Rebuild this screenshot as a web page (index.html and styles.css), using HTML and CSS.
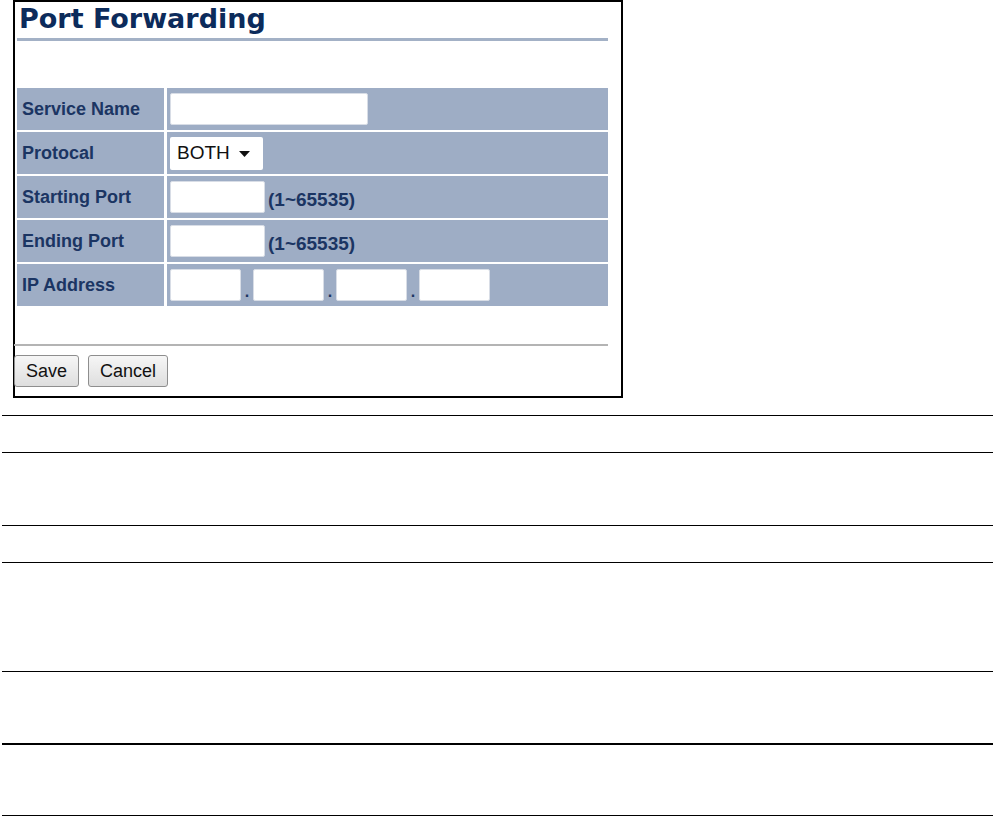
FILE: index.html
```html
<!DOCTYPE html>
<html lang="en">
<head>
  <meta charset="UTF-8" />
  <title>Port Forwarding</title>
  <link rel="stylesheet" href="styles.css">
</head>
<body>
  <div class="shot">
    <h1 class="page-title">Port Forwarding</h1>

    <div class="form-grid">
      <div class="label">Service Name</div>
      <div class="value"><input type="text" class="wide"></div>

      <div class="label">Protocal</div>
      <div class="value">
        <div class="select">
          <span>BOTH</span>
          <svg width="11" height="6" viewBox="0 0 11 6"><path d="M0 0 H11 L5.5 6 Z" fill="#111"/></svg>
        </div>
      </div>

      <div class="label">Starting Port</div>
      <div class="value"><input type="text" class="port"><span class="hint">(1~65535)</span></div>

      <div class="label">Ending Port</div>
      <div class="value"><input type="text" class="port"><span class="hint">(1~65535)</span></div>

      <div class="label">IP Address</div>
      <div class="value ip">
        <input type="text" class="octet"><span class="dot">.</span>
        <input type="text" class="octet"><span class="dot">.</span>
        <input type="text" class="octet"><span class="dot">.</span>
        <input type="text" class="octet">
      </div>
    </div>

    <div class="actions">
      <button>Save</button>
      <button>Cancel</button>
    </div>
  </div>

  <div class="doc-table">
    <div class="doc-row h37"></div>
    <div class="doc-row h73"></div>
    <div class="doc-row h37"></div>
    <div class="doc-row h109"></div>
    <div class="doc-row h72 thick"></div>
    <div class="doc-row h73"></div>
  </div>
</body>
</html>
```

FILE: styles.css
```css
* {
  box-sizing: border-box;
}

body {
  margin: 0;
  background: #fff;
  font-family: "Liberation Sans", Arial, sans-serif;
  color: #000;
}

.shot {
  margin-left: 13px;
  width: 610px;
  height: 398px;
  border: 2px solid #000;
  padding: 0 13px 0 2px;
}

.page-title {
  margin: 0;
  height: 39px;
  padding-left: 2px;
  font-family: "DejaVu Sans", Verdana, sans-serif;
  font-size: 27px;
  line-height: 34px;
  font-weight: bold;
  color: #0c2b5b;
  border-bottom: 3px solid #a3b1c6;
}

.form-grid {
  margin-top: 47px;
  display: grid;
  grid-template-columns: 147px 1fr;
  grid-auto-rows: 42px;
  gap: 2px 3px;
}

.label,
.value {
  background-color: #9eadc5;
  display: flex;
  align-items: center;
}

.label {
  padding-left: 5px;
  font-size: 18px;
  font-weight: bold;
  color: #1b3563;
}

.value {
  padding-left: 3px;
}

.value input {
  height: 32px;
  border: 1px solid #d8dde6;
  border-radius: 2px;
  background: #fff;
  margin: 0;
  padding: 0;
}

.wide {
  width: 198px;
}

.port {
  width: 95px;
}

.hint {
  margin-left: 3px;
  margin-top: 6px;
  font-size: 19px;
  font-weight: bold;
  color: #1b3563;
}

.select {
  width: 93px;
  height: 33px;
  background: #fff;
  border-radius: 2px;
  display: flex;
  align-items: center;
  gap: 9px;
  padding-left: 7px;
  font-size: 19px;
  color: #111;
}

.select svg {
  margin-top: 1px;
}

.octet {
  width: 71px;
}

.dot {
  width: 12px;
  text-align: center;
  font-weight: bold;
  font-size: 16px;
  margin-top: 14px;
  color: #1b3563;
}

.actions {
  margin-top: 38px;
  border-top: 2px solid #b4b4b4;
  padding-top: 9px;
  margin-left: -3px;
  display: flex;
  gap: 9px;
}

.actions button {
  height: 32px;
  padding: 0 11px;
  font-family: "Liberation Sans", Arial, sans-serif;
  font-size: 18px;
  color: #111;
  border: 1px solid #8e8e8e;
  border-radius: 3px;
  background: linear-gradient(#f6f6f6, #dedede);
}

.doc-table {
  margin: 17px 2px 0;
  width: 991px;
}

.doc-row {
  border-top: 1px solid #000;
}

.doc-row:last-child {
  border-bottom: 1px solid #000;
}

.h37 { height: 37px; }
.h73 { height: 73px; }
.h109 { height: 109px; }
.h72 { height: 72px; }

.thick + .doc-row {
  border-top: 2px solid #000;
}
```
